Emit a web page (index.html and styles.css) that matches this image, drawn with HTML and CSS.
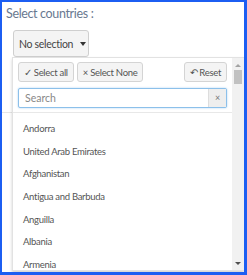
FILE: index.html
```html
<!DOCTYPE html>
<html lang="en">
<head>
    <meta charset="UTF-8">
    <title>Select countries</title>
    <link rel="stylesheet" href="styles.css">
</head>
<body>
    <div class="frame">
        <div class="label">Select countries :</div>
        <button class="select-btn">No selection <span class="caret"></span></button>
        <div class="backdrop-line"></div>

        <!-- open dropdown -->
        <div class="dropdown">
            <div class="dropdown-body">
                <div class="toolbar">
                    <button class="tool-btn">✓ Select all</button>
                    <button class="tool-btn">× Select None</button>
                    <button class="tool-btn reset">↶ Reset</button>
                </div>
                <div class="search">
                    <input type="text" placeholder="Search">
                    <span class="clear">×</span>
                </div>
                <ul class="options">
                    <li>Andorra</li>
                    <li>United Arab Emirates</li>
                    <li>Afghanistan</li>
                    <li>Antigua and Barbuda</li>
                    <li>Anguilla</li>
                    <li>Albania</li>
                    <li>Armenia</li>
                </ul>
            </div>
            <div class="scrollbar">
                <span class="arrow up"></span>
                <span class="thumb"></span>
                <span class="arrow down"></span>
            </div>
        </div>
    </div>
</body>
</html>
```
FILE: styles.css
```css
body {
    margin: 0;
    font-family: 'Lato', sans-serif;
}
.frame {
    position: relative;
    width: 247px;
    height: 275px;
    box-sizing: border-box;
    border-style: solid;
    border-color: #1c5ef2;
    border-width: 2px 3px 3px 2px;
    overflow: hidden;
    background: #fff;
}
.label {
    padding: 4px 0 0 4px;
    font-size: 12.5px;
    letter-spacing: -0.35px;
    color: #687890;
}
.select-btn {
    display: flex;
    align-items: center;
    margin: 9px 0 0 11px;
    width: 76px;
    height: 27px;
    padding: 0 0 0 5px;
    white-space: nowrap;
    background: #f4f4f4;
    border: 1px solid #cfcfcf;
    border-radius: 3px;
    font-family: 'Lato', sans-serif;
    font-size: 10.5px;
    letter-spacing: -0.3px;
    color: #444;
}
.caret {
    margin-left: 7px;
    border-top: 4px solid #333;
    border-left: 3px solid transparent;
    border-right: 3px solid transparent;
}
.backdrop-line {
    margin-top: 55px;
    height: 1px;
    background: #e6e6e6;
}
.dropdown {
    position: absolute;
    left: 10px;
    top: 55px;
    right: 0;
    bottom: 1px;
    display: flex;
    background: #fff;
    border: 1px solid #e2e2e2;
    border-right: none;
    box-shadow: 0 2px 3px rgba(0, 0, 0, 0.18);
}
.dropdown-body {
    flex: 1;
    padding: 4px 5px 0 5px;
    overflow: hidden;
}
.toolbar {
    display: flex;
    gap: 3px;
}
.tool-btn {
    height: 20px;
    padding: 0 5px;
    background: #f4f4f4;
    border: 1px solid #d4d4d4;
    border-radius: 3px;
    font-family: 'Lato', sans-serif;
    font-size: 9.5px;
    letter-spacing: -0.3px;
    color: #555;
}
.reset {
    margin-left: auto;
}
.search {
    position: relative;
    margin: 6px -5px 0 -5px;
    padding: 0 5px 4px 5px;
    border-bottom: 1px solid #e8e8e8;
}
.search input {
    display: block;
    width: 100%;
    height: 20px;
    box-sizing: border-box;
    padding: 0 6px;
    border: 1px solid #8cc0ea;
    border-radius: 2px;
    box-shadow: 0 0 2px rgba(102, 175, 233, 0.6);
    font-family: 'Lato', sans-serif;
    font-size: 10.5px;
    outline: none;
}
.search input::placeholder {
    color: #888;
}
.clear {
    position: absolute;
    right: 6px;
    top: 1px;
    width: 17px;
    height: 18px;
    background: #eee;
    border-left: 1px solid #ddd;
    font-size: 9px;
    line-height: 18px;
    text-align: center;
    color: #777;
}
.options {
    list-style: none;
    margin: 0;
    padding: 5px 0 0 5px;
}
.options li {
    height: 22.67px;
    line-height: 22.67px;
    font-size: 9.5px;
    letter-spacing: -0.3px;
    color: #555;
}
.scrollbar {
    width: 12px;
    background: #f1f1f1;
    position: relative;
}
.thumb {
    position: absolute;
    left: 2px;
    top: 12px;
    width: 8px;
    height: 14px;
    background: #c1c1c1;
}
.arrow {
    position: absolute;
    left: 3px;
    border-left: 3px solid transparent;
    border-right: 3px solid transparent;
}
.arrow.up {
    top: 6px;
    border-bottom: 3px solid #a3a3a3;
}
.arrow.down {
    bottom: 5px;
    border-top: 3px solid #505050;
}
```
